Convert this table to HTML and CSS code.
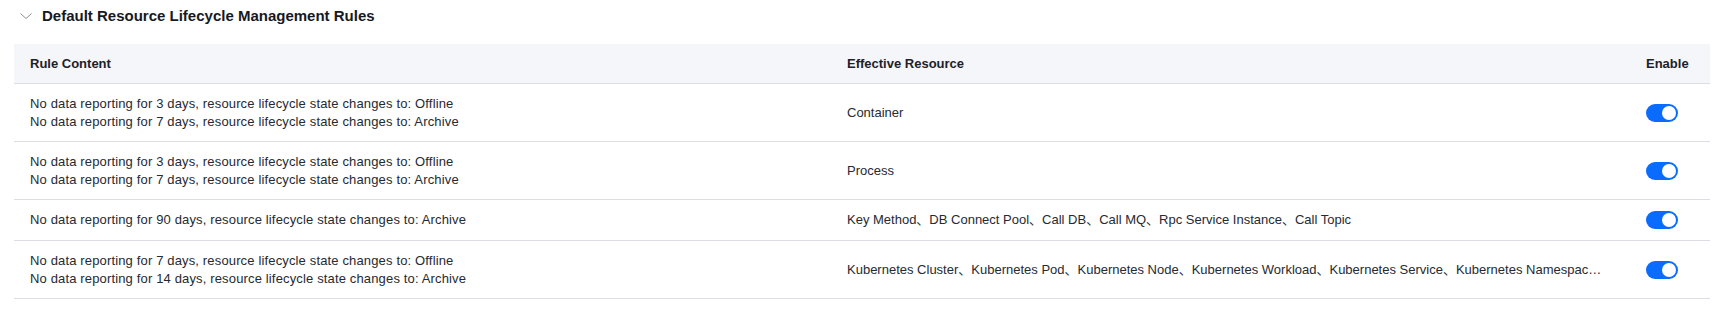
FILE: index.html
```html
<!DOCTYPE html>
<html lang="en">
<head>
<meta charset="utf-8">
<title>Default Resource Lifecycle Management Rules</title>
<link rel="stylesheet" href="styles.css">
</head>
<body>
<section class="panel">
  <div class="panel-title">
    <svg class="chevron" viewBox="0 0 12 12" width="12" height="12" aria-hidden="true">
      <polyline points="0.5,3.5 6,8.5 11.5,3.5" fill="none" stroke="#8a8f99" stroke-width="1"/>
    </svg>
    <span class="title-text">Default Resource Lifecycle Management Rules</span>
  </div>
  <table class="rules">
    <colgroup>
      <col class="col-rule">
      <col class="col-res">
      <col class="col-enable">
    </colgroup>
    <thead>
      <tr>
        <th>Rule Content</th>
        <th>Effective Resource</th>
        <th>Enable</th>
      </tr>
    </thead>
    <tbody>
      <tr>
        <td class="rule-text">No data reporting for 3 days, resource lifecycle state changes to: Offline<br>No data reporting for 7 days, resource lifecycle state changes to: Archive</td>
        <td><div class="ellipsis">Container</div></td>
        <td><span class="switch"><span class="knob"></span></span></td>
      </tr>
      <tr>
        <td class="rule-text">No data reporting for 3 days, resource lifecycle state changes to: Offline<br>No data reporting for 7 days, resource lifecycle state changes to: Archive</td>
        <td><div class="ellipsis">Process</div></td>
        <td><span class="switch"><span class="knob"></span></span></td>
      </tr>
      <tr>
        <td class="rule-text">No data reporting for 90 days, resource lifecycle state changes to: Archive</td>
        <td><div class="ellipsis">Key Method、DB Connect Pool、Call DB、Call MQ、Rpc Service Instance、Call Topic</div></td>
        <td><span class="switch"><span class="knob"></span></span></td>
      </tr>
      <tr>
        <td class="rule-text">No data reporting for 7 days, resource lifecycle state changes to: Offline<br>No data reporting for 14 days, resource lifecycle state changes to: Archive</td>
        <td><div class="ellipsis" title="Kubernetes Cluster、Kubernetes Pod、Kubernetes Node、Kubernetes Workload、Kubernetes Service、Kubernetes Namespace">Kubernetes Cluster、Kubernetes Pod、Kubernetes Node、Kubernetes Workload、Kubernetes Service、Kubernetes Namespac…</div></td>
        <td><span class="switch"><span class="knob"></span></span></td>
      </tr>
    </tbody>
  </table>
</section>
</body>
</html>
```

FILE: styles.css
```css
* { box-sizing: border-box; }

html, body {
  margin: 0;
  padding: 0;
  background: #ffffff;
}

body {
  font-family: "Liberation Sans", Arial, "Noto Sans CJK SC", sans-serif;
  color: #1f2329;
}

.panel {
  padding: 5px 12px 0 14px;
}

.panel-title {
  display: flex;
  align-items: center;
  gap: 10px;
  padding-left: 6px;
  height: 22px;
  margin-bottom: 17px;
}

.chevron {
  display: block;
  flex: none;
}

.title-text {
  font-size: 15px;
  font-weight: 700;
  line-height: 22px;
  color: #16191f;
}

.rules {
  width: 1696px;
  table-layout: fixed;
  border-collapse: collapse;
  border-spacing: 0;
  font-size: 13px;
}

.col-rule { width: 817px; }
.col-res { width: 799px; }
.col-enable { width: 80px; }

.rules th {
  background: #f5f6f9;
  text-align: left;
  font-weight: 700;
  color: #1d2129;
  line-height: 19px;
  padding: 10px 16px;
  border-bottom: 1px solid #dcdee3;
}

.rules td {
  text-align: left;
  vertical-align: middle;
  line-height: 17.5px;
  padding: 11px 16px;
  border-bottom: 1px solid #dcdee3;
  color: #262a31;
}

.rules td.rule-text {
  letter-spacing: 0.15px;
}

.ellipsis {
  white-space: nowrap;
  overflow: hidden;
  text-overflow: ellipsis;
}

.switch {
  display: flex;
  justify-content: flex-end;
  align-items: center;
  width: 32px;
  height: 18px;
  padding: 2px;
  border-radius: 9px;
  background: #0a6cff;
}

.knob {
  display: block;
  width: 14px;
  height: 14px;
  border-radius: 50%;
  background: #ffffff;
}
```
